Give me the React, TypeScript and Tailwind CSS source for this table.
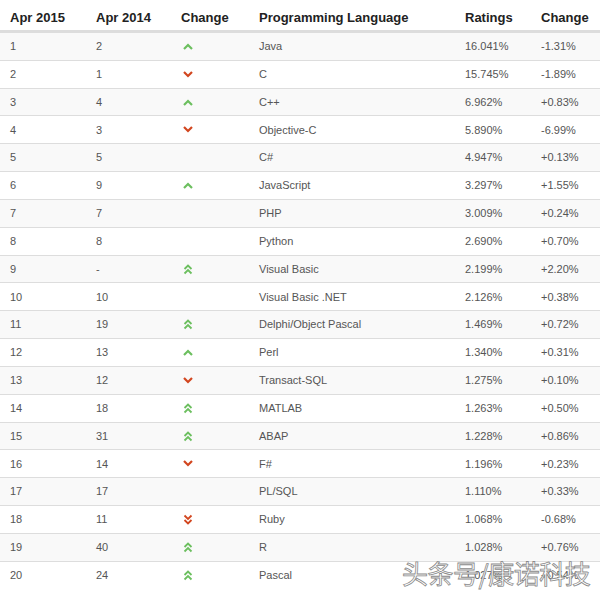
import React from "react";

type Trend = "up" | "down" | "up2" | "down2" | "";

const rows: [string, string, Trend, string, string, string][] = [
  ["1", "2", "up", "Java", "16.041%", "-1.31%"],
  ["2", "1", "down", "C", "15.745%", "-1.89%"],
  ["3", "4", "up", "C++", "6.962%", "+0.83%"],
  ["4", "3", "down", "Objective-C", "5.890%", "-6.99%"],
  ["5", "5", "", "C#", "4.947%", "+0.13%"],
  ["6", "9", "up", "JavaScript", "3.297%", "+1.55%"],
  ["7", "7", "", "PHP", "3.009%", "+0.24%"],
  ["8", "8", "", "Python", "2.690%", "+0.70%"],
  ["9", "-", "up2", "Visual Basic", "2.199%", "+2.20%"],
  ["10", "10", "", "Visual Basic .NET", "2.126%", "+0.38%"],
  ["11", "19", "up2", "Delphi/Object Pascal", "1.469%", "+0.72%"],
  ["12", "13", "up", "Perl", "1.340%", "+0.31%"],
  ["13", "12", "down", "Transact-SQL", "1.275%", "+0.10%"],
  ["14", "18", "up2", "MATLAB", "1.263%", "+0.50%"],
  ["15", "31", "up2", "ABAP", "1.228%", "+0.86%"],
  ["16", "14", "down", "F#", "1.196%", "+0.23%"],
  ["17", "17", "", "PL/SQL", "1.110%", "+0.33%"],
  ["18", "11", "down2", "Ruby", "1.068%", "-0.68%"],
  ["19", "40", "up2", "R", "1.028%", "+0.76%"],
  ["20", "24", "up2", "Pascal", "1.027%", "+0.54%"],
];

function TrendIcon({ t }: { t: Trend }) {
  if (!t) return null;
  const green = "#6cbf5f";
  const red = "#d2461f";
  if (t === "up")
    return (
      <svg width="10" height="7" viewBox="0 0 10 7">
        <path d="M1 6 L5 2 L9 6" fill="none" stroke={green} strokeWidth="2.2" />
      </svg>
    );
  if (t === "down")
    return (
      <svg width="10" height="7" viewBox="0 0 10 7">
        <path d="M1 1 L5 5 L9 1" fill="none" stroke={red} strokeWidth="2.2" />
      </svg>
    );
  if (t === "up2")
    return (
      <svg width="10" height="11" viewBox="0 0 10 11">
        <path d="M1.5 5 L5 1.5 L8.5 5 M1.5 9.5 L5 6 L8.5 9.5" fill="none" stroke={green} strokeWidth="1.8" />
      </svg>
    );
  return (
    <svg width="10" height="11" viewBox="0 0 10 11">
      <path d="M1.5 1.5 L5 5 L8.5 1.5 M1.5 6 L5 9.5 L8.5 6" fill="none" stroke={red} strokeWidth="1.8" />
    </svg>
  );
}

const cols = "grid grid-cols-[86px_85px_78px_206px_76px_1fr] pl-[10px]";

export default function App() {
  return (
    <div className="relative w-[600px] h-[594px] bg-white font-['Liberation_Sans',Arial,sans-serif]">
      {/* Header */}
      <div className={`${cols} h-[32px] items-center pt-[6px] border-b-2 border-[#dddddd] text-[13px] font-bold text-[#222]`}>
        <div>Apr 2015</div>
        <div>Apr 2014</div>
        <div>Change</div>
        <div>Programming Language</div>
        <div>Ratings</div>
        <div>Change</div>
      </div>

      {/* Rows */}
      {rows.map((r, i) => (
        <div
          key={r[0]}
          className={`${cols} h-[27.84px] items-center border-t border-[#dddddd] first:border-t-0 text-[11px] text-[#555] ${
            i % 2 === 0 ? "bg-[#f9f9f9]" : "bg-white"
          }`}
        >
          <div>{r[0]}</div>
          <div>{r[1]}</div>
          <div className="flex pl-[2px]">
            <TrendIcon t={r[2]} />
          </div>
          <div>{r[3]}</div>
          <div>{r[4]}</div>
          <div>{r[5]}</div>
        </div>
      ))}

      {/* Watermark */}
      <div className="absolute left-[402px] top-[557px] text-[26px] leading-[32px] text-white [-webkit-text-stroke:0.8px_#8a8a8a] font-['Noto_Sans_CJK_SC',sans-serif] tracking-[-0.5px]">
        头条号/康诺科技
      </div>
    </div>
  );
}
